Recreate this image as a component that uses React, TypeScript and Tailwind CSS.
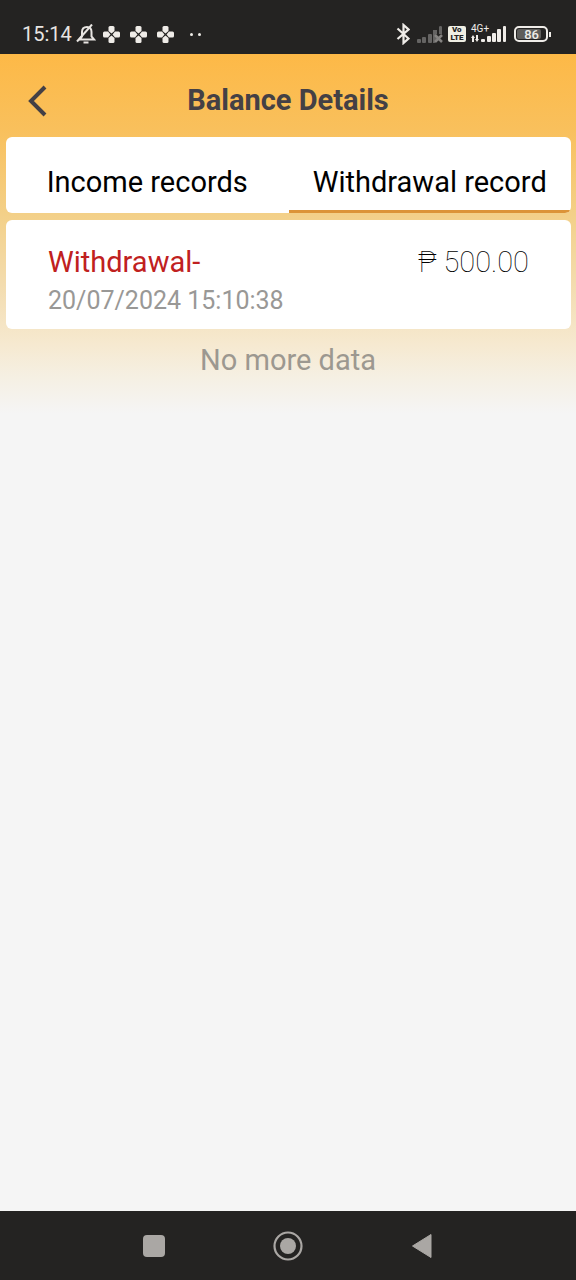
import { useState } from "react";

type RecordItem = {
    title: string;
    amount: string;
    date: string;
};

const withdrawals: RecordItem[] = [
    { title: "Withdrawal-", amount: "₱ 500.00", date: "20/07/2024 15:10:38" },
];

const income: RecordItem[] = [];

function BellOffIcon() {
    return (
        <svg
            className="w-5 h-5"
            viewBox="0 0 20 20"
            fill="none"
            stroke="#e8e5e2"
            strokeWidth="2"
        >
            <path d="M3 15.500h15l-2.500-3V8c0-3-1.500-5-4.500-5S6 5 6 8v4.500l-2.500 3" />
            <path d="M1 17.500 16 0.500" />
            <path d="M7.500 18.500h5" />
        </svg>
    );
}

// four rounded petals, used for the app notifications
function PetalIcon() {
    return (
        <svg className="w-[17px] h-[17px]" viewBox="0 0 17 17" fill="#efece8">
            <path d="M7 0h3q1.500 0 1.500 1.500V5L8.500 7.500 5.500 5V1.500Q5.500 0 7 0z" />
            <path d="M7 17h3q1.500 0 1.500-1.500V12L8.500 9.500 5.500 12v3.500Q5.500 17 7 17z" />
            <path d="M0 7v3q0 1.500 1.500 1.500H5L7.500 8.500 5 5.500H1.500Q0 5.500 0 7z" />
            <path d="M17 7v3q0 1.500-1.500 1.500H12L9.500 8.500 12 5.500h3.500Q17 5.500 17 7z" />
        </svg>
    );
}

function BluetoothIcon() {
    return (
        <svg
            className="w-[14px] h-[22px]"
            viewBox="0 0 14 22"
            fill="none"
            stroke="#efece8"
            strokeWidth="2.200"
        >
            <path d="M1.500 5.500l11 10-5 4.500V2l5 4.500-11 9.500" />
        </svg>
    );
}

function NoSignalIcon() {
    return (
        <svg className="w-[26px] h-[17px]" viewBox="0 0 26 17" fill="#656463">
            <rect x="0" y="13" width="4" height="4" rx="1" />
            <rect x="5" y="11" width="4" height="6" rx="1" />
            <rect x="11" y="8" width="4" height="9" rx="1" />
            <path d="M16 4h4v4l-2 1 3 3.500-3 3v1.500h-2z" />
            <path d="M22 1q0-1 1.500-1T25 1v7h-3z" />
            <path
                d="M18 9l7 7M25 9l-7 7"
                stroke="#858381"
                strokeWidth="2.500"
                fill="none"
            />
        </svg>
    );
}

function VolteIcon() {
    return (
        <span className="w-[18px] h-4 rounded-xs bg-[#efeee3] text-[#242322] text-[8px] leading-[8px] font-black flex flex-col">
            <span className="pl-1">Vo</span>
            <span className="text-center">LTE</span>
        </span>
    );
}

function SignalIcon() {
    return (
        <span className="relative w-9 h-5">
            <span className="absolute left-0 top-0 text-[10px] leading-[10px] text-[#efece8]">
                4G+
            </span>
            <svg className="w-9 h-5" viewBox="0 0 36 20" fill="#efece8">
                <path d="M0 14 2 11l2 3H3v4H1v-4z" />
                <path d="M4 15h1v-4h2v4h1l-2 3z" />
                <rect x="10" y="15" width="4" height="3" rx="1" />
                <rect x="16" y="12" width="4" height="6" rx="1" />
                <rect x="21" y="9" width="4" height="9" rx="1" />
                <rect x="26" y="5" width="4" height="13" rx="1" />
                <rect x="32" y="2" width="3" height="16" rx="1" />
            </svg>
        </span>
    );
}

function BatteryIcon() {
    return (
        <span className="flex items-center">
            <span className="w-[34px] h-4 rounded-[5px] border-2 border-[#efece8] p-px flex">
                <span className="w-6 rounded-xs bg-[#5e5d5b] text-[#efece8] text-[13px] leading-[11px] font-medium text-right">
                    <span className="pr-[2px]">86</span>
                </span>
            </span>
            <span className="ml-px w-[2px] h-[5px] bg-[#efece8]"></span>
        </span>
    );
}

function StatusBar() {
    return (
        <div className="h-[54px] shrink-0 bg-[#242322] pt-[14px] pl-[22px] pr-[25px] flex items-center justify-between">
            <div className="flex items-center text-[#e8e5e2]">
                <span className="text-xl w-[54px]">15:14</span>
                <BellOffIcon />
                <div className="flex gap-[10px] ml-[7px]">
                    <PetalIcon />
                    <PetalIcon />
                    <PetalIcon />
                </div>
                <div className="flex gap-[5px] ml-4">
                    <span className="w-[3px] h-[3px] rounded-full bg-[#efece8]"></span>
                    <span className="w-[3px] h-[3px] rounded-full bg-[#efece8]"></span>
                </div>
            </div>
            <div className="flex items-center">
                <BluetoothIcon />
                <div className="flex items-center gap-[5px] ml-[7px]">
                    <NoSignalIcon />
                    <VolteIcon />
                    <SignalIcon />
                </div>
                <div className="ml-[7px]">
                    <BatteryIcon />
                </div>
            </div>
        </div>
    );
}

function NavBar() {
    return (
        <nav className="h-[69px] shrink-0 bg-[#242322] flex justify-center gap-[104px]">
            <button
                aria-label="Recent apps"
                className="w-[30px] flex items-center justify-center"
            >
                <svg className="w-[22px] h-[22px]" viewBox="0 0 22 22">
                    <rect width="22" height="22" rx="4" fill="#aaa7a4" />
                </svg>
            </button>
            <button
                aria-label="Home"
                className="w-[30px] flex items-center justify-center"
            >
                <svg className="w-[30px] h-[30px]" viewBox="0 0 30 30">
                    <circle
                        cx="15"
                        cy="15"
                        r="13.500"
                        fill="none"
                        stroke="#aaa7a4"
                        strokeWidth="2.200"
                    />
                    <circle cx="15" cy="15" r="8" fill="#aaa7a4" />
                </svg>
            </button>
            <button
                aria-label="Back"
                className="w-[30px] flex items-center justify-center"
            >
                <svg className="w-5 h-[26px]" viewBox="0 0 20 26">
                    <path
                        d="M0.500 13 19 1.500v23z"
                        fill="#aaa7a4"
                        stroke="#aaa7a4"
                        strokeWidth="1"
                        strokeLinejoin="round"
                    />
                </svg>
            </button>
        </nav>
    );
}

export default function App() {
    const [tab, setTab] = useState<"income" | "withdrawal">("withdrawal");

    const records = tab === "income" ? income : withdrawals;

    return (
        <div className="min-h-screen flex flex-col bg-[#f5f5f5] font-['Roboto',sans-serif]">
            <StatusBar />

            <main className="grow bg-[linear-gradient(to_bottom,#fdb947_0px,#f9c05c_75px,#f3d088_160px,#f3dcae_230px,#f6e9d0_290px,#f5f0e4_325px,#f5f5f5_360px)]">
                {/* Header */}
                <header className="h-[83px] grid grid-cols-[74px_1fr_74px] pt-[10px] items-center">
                    <button
                        aria-label="Go back"
                        className="h-full pl-7 flex items-center"
                    >
                        <svg
                            className="w-[19px] h-8"
                            viewBox="0 0 19 32"
                            fill="none"
                            stroke="#444045"
                            strokeWidth="4"
                        >
                            <path d="M17 2 3 16l14 14" />
                        </svg>
                    </button>
                    <h1 className="text-center text-[29px] font-bold text-[#444045]">
                        Balance Details
                    </h1>
                </header>

                <div className="pl-[6px] pr-[5px] flex flex-col gap-[7px]">
                    {/* Tabs */}
                    <div
                        role="tablist"
                        className="h-[76px] grid grid-cols-2 bg-white rounded-md overflow-hidden text-[29px] text-black"
                    >
                        <button
                            role="tab"
                            aria-selected={tab === "income"}
                            onClick={() => setTab("income")}
                            className={`pt-[18px] border-b-3 whitespace-nowrap ${
                                tab === "income"
                                    ? "border-[#dc9438]"
                                    : "border-transparent"
                            }`}
                        >
                            Income records
                        </button>
                        <button
                            role="tab"
                            aria-selected={tab === "withdrawal"}
                            onClick={() => setTab("withdrawal")}
                            className={`pt-[18px] border-b-3 whitespace-nowrap ${
                                tab === "withdrawal"
                                    ? "border-[#dc9438]"
                                    : "border-transparent"
                            }`}
                        >
                            Withdrawal record
                        </button>
                    </div>

                    {/* Records */}
                    {records.map((record) => (
                        <div
                            key={record.date}
                            className="h-[109px] bg-white rounded-md pt-6 px-[42px]"
                        >
                            <div className="flex justify-between text-[29px] leading-9">
                                <span className="text-[#c02020]">
                                    {record.title}
                                </span>
                                <span className="font-thin text-black">
                                    {record.amount}
                                </span>
                            </div>
                            <p className="mt-1 text-[25px] leading-[34px] text-[#999896]">
                                {record.date}
                            </p>
                        </div>
                    ))}
                </div>

                <p className="mt-[13px] text-center text-[29px] leading-9 text-[#9c9890]">
                    No more data
                </p>
            </main>

            <NavBar />
        </div>
    );
}
